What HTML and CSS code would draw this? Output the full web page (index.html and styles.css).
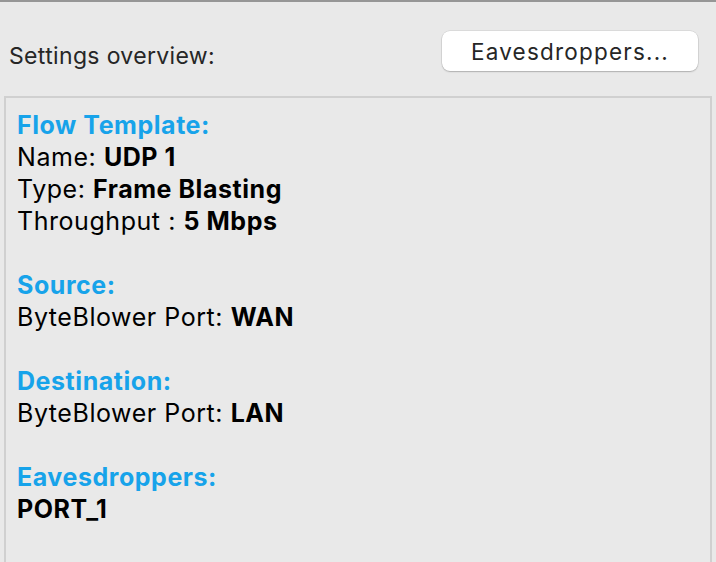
FILE: index.html
```html
<!DOCTYPE html>
<html>
<head>
<meta charset="utf-8">
<link rel="stylesheet" href="styles.css">
</head>
<body>
<div class="window">
  <div class="header">
    <span class="label">Settings overview:</span>
    <button class="btn">Eavesdroppers...</button>
  </div>
  <div class="panel">
    <div class="h">Flow Template:</div>
    <div class="l">Name: <b>UDP 1</b></div>
    <div class="l">Type: <b>Frame Blasting</b></div>
    <div class="l">Throughput : <b>5 Mbps</b></div>
    <div class="gap"></div>
    <div class="h">Source:</div>
    <div class="l">ByteBlower Port: <b>WAN</b></div>
    <div class="gap"></div>
    <div class="h">Destination:</div>
    <div class="l">ByteBlower Port: <b>LAN</b></div>
    <div class="gap"></div>
    <div class="h">Eavesdroppers:</div>
    <div class="l"><b>PORT_1</b></div>
  </div>
</div>
</body>
</html>
```
FILE: styles.css
```css
html, body {
  margin: 0;
  padding: 0;
  height: 100%;
  overflow: hidden;
  background: #e9e9e9;
  font-family: Inter, "Noto Sans", sans-serif;
}
.window {
  border-top: 2px solid #969696;
  height: 100%;
  box-sizing: border-box;
}
.header {
  display: flex;
  justify-content: space-between;
  align-items: flex-start;
  height: 94px;
}
.label {
  margin-top: 40px;
  margin-left: 9px;
  font-size: 23px;
  line-height: 28px;
  letter-spacing: 0.35px;
  color: #262626;
}
.btn {
  margin-top: 29px;
  margin-right: 18px;
  width: 256px;
  height: 40px;
  border: none;
  border-radius: 8px;
  background: #ffffff;
  box-shadow: 0 0 0 0.5px rgba(0,0,0,0.12), 0 1px 1.5px rgba(0,0,0,0.2);
  font-family: Inter, "Noto Sans", sans-serif;
  font-size: 22.5px;
  letter-spacing: 1.2px;
  color: #262626;
  padding: 0;
}
.panel {
  margin-left: 4px;
  margin-right: 4px;
  border: 2px solid #d0d0d0;
  border-bottom: none;
  height: 600px;
  padding: 11px 11px;
  font-size: 25px;
  line-height: 32px;
  letter-spacing: 0.55px;
  color: #000;
}
.h {
  color: #17a3ea;
  font-weight: 700;
}
.l b {
  font-weight: 700;
}
.gap {
  height: 32px;
}
```
